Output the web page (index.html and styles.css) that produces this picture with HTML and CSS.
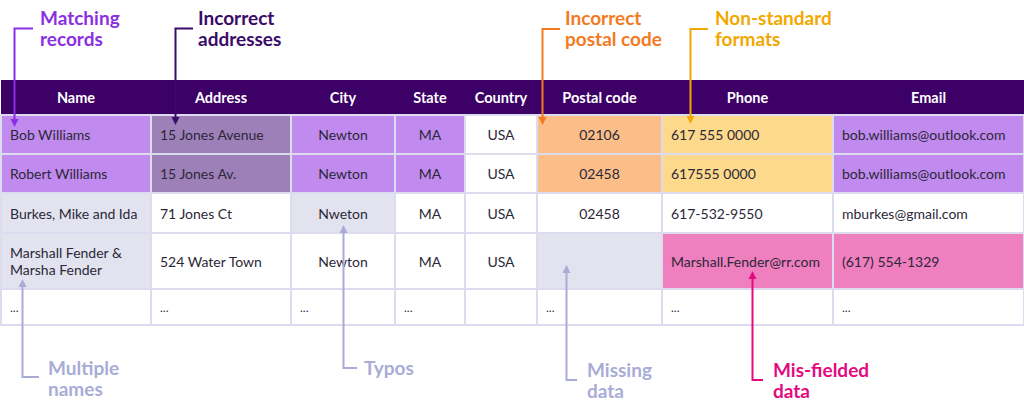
FILE: index.html
```html
<!DOCTYPE html>
<html lang="en">
<head>
<meta charset="utf-8">
<title>Data quality issues</title>
<link rel="stylesheet" href="styles.css">
</head>
<body>
<div class="canvas">
  <table class="grid">
    <colgroup>
      <col class="c-name"><col class="c-addr"><col class="c-city"><col class="c-state"><col class="c-country"><col class="c-postal"><col class="c-phone"><col class="c-email">
    </colgroup>
    <thead>
      <tr>
        <th>Name</th><th>Address</th><th>City</th><th>State</th><th>Country</th><th>Postal code</th><th>Phone</th><th>Email</th>
      </tr>
    </thead>
    <tbody>
      <tr class="r1">
        <td class="left match">Bob Williams</td>
        <td class="left addr">15 Jones Avenue</td>
        <td class="match">Newton</td>
        <td class="match">MA</td>
        <td>USA</td>
        <td class="postal">02106</td>
        <td class="left fmt">617 555 0000</td>
        <td class="left match">bob.williams@outlook.com</td>
      </tr>
      <tr class="r2">
        <td class="left match">Robert Williams</td>
        <td class="left addr">15 Jones Av.</td>
        <td class="match">Newton</td>
        <td class="match">MA</td>
        <td>USA</td>
        <td class="postal">02458</td>
        <td class="left fmt">617555 0000</td>
        <td class="left match">bob.williams@outlook.com</td>
      </tr>
      <tr class="r3">
        <td class="left soft">Burkes, Mike and Ida</td>
        <td class="left">71 Jones Ct</td>
        <td class="soft">Nweton</td>
        <td>MA</td>
        <td>USA</td>
        <td>02458</td>
        <td class="left">617-532-9550</td>
        <td class="left">mburkes@gmail.com</td>
      </tr>
      <tr class="r4">
        <td class="left soft">Marshall Fender &amp; Marsha Fender</td>
        <td class="left">524 Water Town</td>
        <td>Newton</td>
        <td>MA</td>
        <td>USA</td>
        <td class="soft"></td>
        <td class="left misf">Marshall.Fender@rr.com</td>
        <td class="left misf">(617) 554-1329</td>
      </tr>
      <tr class="r5">
        <td class="left">...</td>
        <td class="left">...</td>
        <td class="left">...</td>
        <td class="left">...</td>
        <td class="left"></td>
        <td class="left">...</td>
        <td class="left">...</td>
        <td class="left">...</td>
      </tr>
    </tbody>
  </table>

  <svg class="leaders" width="1024" height="412" viewBox="0 0 1024 412" aria-hidden="true">
    <g fill="none" stroke-width="2">
      <path d="M33 28.5 H14.5 V121" stroke="#8b2fe3"/>
      <path d="M193 28.5 H175.5 V119" stroke="#3b0b68"/>
      <path d="M560 29 H542.5 V119" stroke="#f47a1f"/>
      <path d="M708 29 H690.5 V118" stroke="#f1a800"/>
      <path d="M22.5 285 V377 H39" stroke="#a9acd6"/>
      <path d="M343.5 231 V368 H357" stroke="#a9acd6"/>
      <path d="M566.5 271 V380 H577" stroke="#a9acd6"/>
      <path d="M752.5 277 V380 H763" stroke="#e5097f"/>
    </g>
    <polygon points="10.5,119 18.5,119 14.5,127" fill="#8b2fe3"/>
    <polygon points="171.5,117 179.5,117 175.5,125" fill="#3b0b68"/>
    <polygon points="538.5,117 546.5,117 542.5,125" fill="#f47a1f"/>
    <polygon points="686.5,116 694.5,116 690.5,124" fill="#f1a800"/>
    <polygon points="18.5,287 26.5,287 22.5,279" fill="#a9acd6"/>
    <polygon points="339.5,233 347.5,233 343.5,225" fill="#a9acd6"/>
    <polygon points="562.5,273 570.5,273 566.5,265" fill="#a9acd6"/>
    <polygon points="748.5,279 756.5,279 752.5,271" fill="#e5097f"/>
  </svg>

  <div class="note n-match">Matching<br>records</div>
  <div class="note n-addr">Incorrect<br>addresses</div>
  <div class="note n-postal">Incorrect<br>postal code</div>
  <div class="note n-fmt">Non-standard<br>formats</div>
  <div class="note n-multi">Multiple<br>names</div>
  <div class="note n-typo">Typos</div>
  <div class="note n-miss">Missing<br>data</div>
  <div class="note n-misf">Mis-fielded<br>data</div>
</div>
</body>
</html>
```

FILE: styles.css
```css
* { box-sizing: border-box; }

html, body {
  margin: 0;
  padding: 0;
  background: #ffffff;
}

body {
  font-family: "Lato", "Open Sans", sans-serif;
  color: #2b2838;
}

.canvas {
  position: relative;
  width: 1024px;
  height: 412px;
  padding-top: 80px;
  overflow: hidden;
}

.grid {
  width: 1023px;
  table-layout: fixed;
  border-collapse: collapse;
  font-size: 14px;
}

.c-name { width: 150px; }
.c-addr { width: 140px; }
.c-city { width: 104px; }
.c-state { width: 70px; }
.c-country { width: 72px; }
.c-postal { width: 125px; }
.c-phone { width: 171px; }
.c-email { width: 191px; }

.grid th {
  background: #3c0066;
  color: #ffffff;
  font-weight: 700;
  font-size: 14.5px;
  height: 35px;
  padding: 0 6px;
  text-align: center;
  border: none;
}

.grid td {
  border: 2px solid #dcdcee;
  padding: 0 8px;
  text-align: center;
  line-height: 17px;
  background: #ffffff;
}

.grid td.left { text-align: left; }

.r1 td { height: 39px; }
.r2 td { height: 39px; }
.r3 td { height: 40px; }
.r4 td { height: 56px; }
.r5 td { height: 36px; font-size: 12px; }

.grid td.match { background: #c08aee; }
.grid td.addr { background: #9e80b8; }
.grid td.postal { background: #fcbe88; }
.grid td.fmt { background: #fdd98c; }
.grid td.misf { background: #f07fbf; }
.grid td.soft { background: #e2e3ef; }

.leaders {
  position: absolute;
  left: 0;
  top: 0;
  pointer-events: none;
}

.note {
  position: absolute;
  font-size: 19px;
  line-height: 21px;
  font-weight: 700;
  white-space: nowrap;
}

.n-match { left: 40px; top: 7px; color: #8b2fe3; }
.n-addr { left: 198px; top: 7px; color: #3b0b68; }
.n-postal { left: 565px; top: 7px; color: #f47a1f; }
.n-fmt { left: 715px; top: 7px; color: #f1a800; }
.n-multi { left: 48px; top: 357px; color: #a9acd6; }
.n-typo { left: 364px; top: 357px; color: #a9acd6; }
.n-miss { left: 587px; top: 359px; color: #a9acd6; }
.n-misf { left: 773px; top: 359px; color: #e5097f; }
```
